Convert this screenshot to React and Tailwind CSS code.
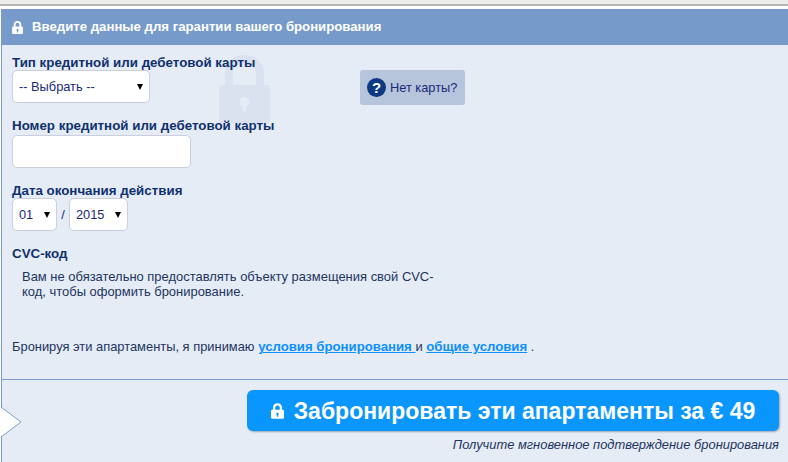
const font = { fontFamily: '"Liberation Sans", Arial, sans-serif' };

function LockIcon({ className }) {
  return (
    <svg viewBox="0 0 20 24" className={className} fill="currentColor">
      <path fillRule="evenodd" d="M10 0C5.600 0 3 3 3 7v3H2a2 2 0 0 0-2 2v10a2 2 0 0 0 2 2h16a2 2 0 0 0 2-2V12a2 2 0 0 0-2-2h-1V7c0-4-2.600-7-7-7zM6.500 10V7c0-2.200 1.300-3.600 3.500-3.600s3.500 1.400 3.500 3.600v3zM10 14.500a2 2 0 0 0-1 3.700V21h2v-2.800a2 2 0 0 0-1-3.700z" />
    </svg>
  );
}

function Watermark({ className }) {
  return (
    <svg viewBox="0 0 51 68" className={className}>
      <path d="M10 32V20C10 10 16 4 25.500 4S41 10 41 20v12" fill="none" stroke="#d9e2ee" strokeWidth="8" />
      <rect x="0" y="30" width="51" height="38" rx="3" fill="#d9e2ee" />
      <circle cx="25.500" cy="47" r="5" fill="#e5ecf6" />
      <rect x="23.500" y="48" width="4" height="9" rx="2" fill="#e5ecf6" />
    </svg>
  );
}

function Caret() {
  return <span className="w-0 h-0 border-x-[3px] border-x-transparent border-t-[6px] border-t-black" />;
}

function FakeSelect({ value, className }) {
  return (
    <div className={`flex items-center justify-between bg-white border border-[#c9cfdf] rounded-[5px] pl-[6px] pr-[6px] text-[12.800px] text-[#1a2a78] ${className}`}>
      <span>{value}</span>
      <Caret />
    </div>
  );
}

export default function App() {
  return (
    <div className="w-[788px] h-[462px] overflow-hidden bg-white flex flex-col" style={font}>
      <div className="h-[6px] bg-[#ececea] border-b-2 border-[#b5b5b3] shrink-0" />
      <div className="h-[3px] bg-white shrink-0" />
      <div className="relative flex-1 flex flex-col ml-[1px] border-l border-[#7a9ccc] bg-[#e5ecf6]">
        <div className="h-[36px] shrink-0 bg-[#769bcb] flex items-center pl-[10px] gap-[9px] text-white font-bold text-[13.200px]">
          <LockIcon className="w-[11px] h-[13px] text-white" />
          <span>Введите данные для гарантии вашего бронирования</span>
        </div>

        <Watermark className="absolute left-[217px] top-[46px] w-[51px] h-[68px]" />

        <div className="relative h-[334px] shrink-0 px-[10px] pt-[10px] text-[#10306e]">
          <div className="flex items-start">
            <div className="w-[348px]">
              <div className="text-[13.330px] leading-[15px] font-bold">Тип кредитной или дебетовой карты</div>
              <FakeSelect value="-- Выбрать --" className="w-[138px] h-[33px]" />
            </div>
            <div className="mt-[15px] h-[35px] flex items-center gap-[4px] rounded-[3px] bg-[#b6c4dc] pl-[7px] pr-[8px] text-[12.800px] text-[#1a2a78]">
              <span className="w-[19px] h-[19px] rounded-full bg-[#0b3a82] flex items-center justify-center text-white font-bold text-[15px] leading-none">?</span>
              <span>Нет карты?</span>
            </div>
          </div>

          <div className="mt-[13px] mb-[2px] text-[13.330px] leading-[15px] font-bold">Номер кредитной или дебетовой карты</div>
          <div className="w-[179px] h-[33px] bg-white border border-[#c9cfdf] rounded-[5px]" />

          <div className="mt-[15px] text-[13.330px] leading-[15px] font-bold">Дата окончания действия</div>
          <div className="flex items-center">
            <FakeSelect value="01" className="w-[45px] h-[33px]" />
            <span className="w-[12px] text-center text-[12.800px] text-[#1a2a78]">/</span>
            <FakeSelect value="2015" className="w-[59px] h-[33px]" />
          </div>

          <div className="mt-[15px] text-[13.330px] leading-[15px] font-bold">CVC-код</div>
          <p className="mt-[8px] ml-[10px] w-[415px] text-[12.960px] leading-[15px] text-[#22345f]">
            Вам не обязательно предоставлять объекту размещения свой CVC-код, чтобы оформить бронирование.
          </p>

          <p className="mt-[40px] text-[12.900px] leading-[15px] text-[#22345f]">
            Бронируя эти апартаменты, я принимаю{' '}
            <a className="font-bold text-[13.200px] text-[#0d8fff] underline">условия бронирования </a>
            {' '}и{' '}
            <a className="font-bold text-[13.200px] text-[#0d8fff] underline">общие условия</a>
            {' '}.
          </p>
        </div>

        <div className="flex-1 border-t border-[#7a9ccc] flex flex-col items-end pr-[9px] pt-[10px]">
          <div className="w-[532px] h-[41px] rounded-[6px] bg-[#0a96ff] shadow-[1px_1px_2px_rgba(0,0,0,0.3)] flex items-center justify-center gap-[10px] text-white font-bold text-[23px]">
            <LockIcon className="w-[13px] h-[16px] text-white" />
            <span className="pt-[1px]">Забронировать эти апартаменты за € 49</span>
          </div>
          <div className="mt-[6px] text-[12.900px] leading-[15px] italic text-[#22345f]">Получите мгновенное подтверждение бронирования</div>
        </div>

        {/* white notch on the left edge */}
        <svg className="absolute left-[-1px] top-[397px] w-[21px] h-[32px]" viewBox="0 0 21 32">
          <path d="M0 1 L20 16 L0 31 Z" fill="#fff" />
          <path d="M0 1 L20 16 L0 31" fill="none" stroke="#7a9ccc" />
        </svg>
      </div>
    </div>
  );
}
